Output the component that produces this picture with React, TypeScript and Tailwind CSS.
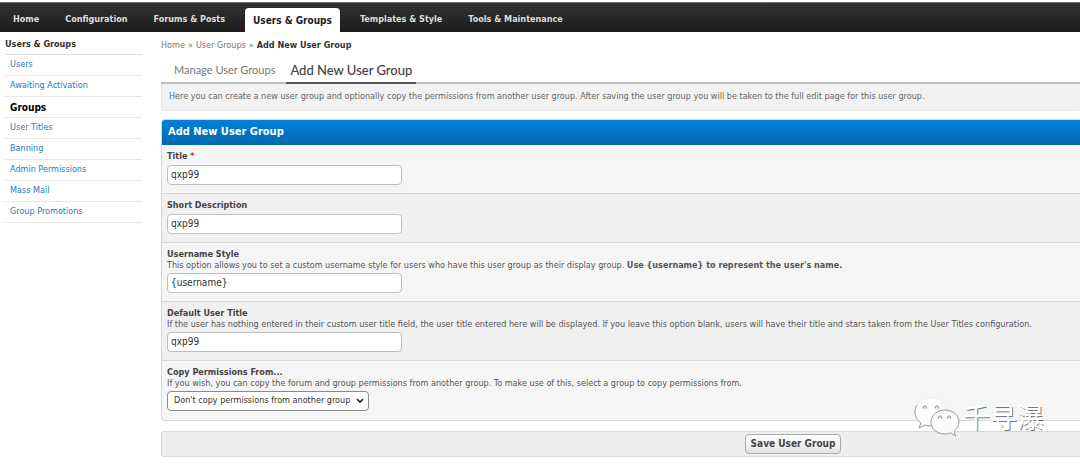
import type { ReactNode } from "react";

const navItems = ["Home", "Configuration", "Forums & Posts", "Users & Groups", "Templates & Style", "Tools & Maintenance"];

const sideItems = [
  "Users",
  "Awaiting Activation",
  "Groups",
  "User Titles",
  "Banning",
  "Admin Permissions",
  "Mass Mail",
  "Group Promotions",
];

function Nav() {
  return (
    <nav className="flex h-[30px] items-end gap-[10px] border-t border-[#6b7472] bg-linear-to-b from-[#333333] to-[#1b1b1b] pl-[5px] font-bold">
      {navItems.map((item) => (
        <a
          key={item}
          href="#"
          className={
            item === "Users & Groups"
              ? "mx-[2px] flex h-6 items-center rounded-t-[4px] bg-white px-2 text-[10px] text-[#222222]"
              : "flex h-6 items-center px-2 text-[#dddddd]"
          }
        >
          {item}
        </a>
      ))}
    </nav>
  );
}

function Sidebar() {
  return (
    <aside className="w-[137px] shrink-0">
      <h2 className="flex h-[23px] items-center border-b border-[#dddddd] pt-[3px] font-bold text-[#333333]">
        Users &amp; Groups
      </h2>
      <ul>
        {sideItems.map((item) => (
          <li key={item} className="flex h-[21px] items-center border-b border-[#e6e6e6] pl-[5px]">
            <a href="#" className={item === "Groups" ? "text-[10px] font-bold text-black" : "text-[#2a7ab8]"}>
              {item}
            </a>
          </li>
        ))}
      </ul>
    </aside>
  );
}

type FieldProps = { id: string; label: string; required?: boolean; note?: ReactNode; children: ReactNode };

function Field({ id, label, required, note, children }: FieldProps) {
  return (
    <div className="border-b border-[#d8d8d8] bg-[#f5f5f5] px-[5px] pt-[5px] pb-2 last:border-b-0 last:pb-[9px] even:bg-[#f0f0f0]">
      <label htmlFor={id} className="block leading-3 font-bold text-[#444444]">
        {label}
        {required && <span className="text-[#dd3333]"> *</span>}
      </label>
      {note && <p className="leading-[10px] whitespace-nowrap text-[#555555]">{note}</p>}
      <div className="mt-[3px] flex">{children}</div>
    </div>
  );
}

function TextField({ id, value }: { id: string; value: string }) {
  return (
    <input
      id={id}
      type="text"
      defaultValue={value}
      className="h-5 w-[235px] rounded-[4px] border border-[#bdbdbd] bg-white px-[3px] text-[10px] text-[#333333]"
    />
  );
}

function Watermark() {
  return (
    <div className="pointer-events-none absolute top-[396px] left-[913px] flex items-center gap-[3px]">
      <svg width="47" height="42" viewBox="0 0 47 42" aria-hidden="true">
        <path
          d="M18 2C9 2 2 8 2 16c0 5 2.500 8.500 6 11l-2 5 6-3c2 .7 4 1 6 1 9 0 16-6 16-14S27 2 18 2Z"
          fill="#fdfdfd"
          stroke="#dddddd"
          strokeWidth="0.500"
        />
        <path d="M4 9C2.500 11.500 2 14 2 16c0 5 2.500 8.500 6 11l-2 5 6-3c2 .7 4 1 6 1" fill="none" stroke="#999999" strokeWidth="0.900" />
        <path
          d="M32 14c-8 0-14 5.300-14 12s6 12 14 12c2 0 4-.4 5.500-1l5 3-1.400-5c3-2.200 4.900-5.400 4.900-9 0-6.700-6-12-14-12Z"
          fill="#fafafa"
          stroke="#909090"
          strokeWidth="0.900"
        />
        <path
          d="M10 12.500c-.5-3.500 4-3.500 3.500 0M22 12.500c-.5-3.500 4-3.500 3.500 0M25.500 22.500c-.5-3.300 3.700-3.300 3.200 0M34.500 22.500c-.5-3.300 3.700-3.300 3.200 0"
          fill="#dddddd"
          stroke="#888888"
        />
      </svg>
      <span className="font-['Noto_Sans_CJK_SC',sans-serif] text-[27px] leading-[42px] font-light text-white [text-shadow:-1px_-1px_0_#ffffff,1px_1px_0_#777777]">
        千寻瀑
      </span>
    </div>
  );
}

export default function App() {
  return (
    <div className="relative overflow-x-clip bg-white pt-[2px] font-['DejaVu_Sans_Condensed','DejaVu_Sans',sans-serif] text-[9px]">
      <Nav />
      <div className="flex gap-[19px] pl-[5px]">
        <Sidebar />
        <main className="min-w-0 flex-1 pt-[7px]">
          <div className="flex gap-[3px] text-[#777777]">
            <a href="#">Home</a>
            <span>»</span>
            <a href="#">User Groups</a>
            <span>»</span>
            <strong className="text-[#333333]">Add New User Group</strong>
          </div>
          <div className="mt-[5px] flex border-b-2 border-[#bbbbbb] pl-[5px] font-['Lato',sans-serif] leading-6">
            <a href="#" className="pr-[11px] pl-2 text-[11px] text-[#777777]">
              Manage User Groups
            </a>
            <a href="#" className="-mb-[2px] border-b-2 border-[#555555] px-1 text-[13px] font-medium text-[#444444]">
              Add New User Group
            </a>
          </div>
          <p className="flex h-[27px] items-center rounded-b-[3px] border-b border-l border-[#e5e5e5] bg-[#f2f2f2] px-[7px] pt-px whitespace-nowrap text-[#666666]">
            Here you can create a new user group and optionally copy the permissions from another user group. After saving
            the user group you will be taken to the full edit page for this user group.
          </p>
          <form>
            <section className="mt-2 overflow-hidden rounded-l-[4px] border-y border-l border-[#d8d8d8]">
              <h1 className="flex h-[26px] items-center border-b border-[#085386] bg-linear-to-b from-[#0280d8] to-[#0069ad] px-[6px] pt-px text-[11px] font-bold text-white">
                Add New User Group
              </h1>
              <div className="-mt-px">
                <Field id="title" label="Title" required>
                  <TextField id="title" value="qxp99" />
                </Field>
                <Field id="description" label="Short Description">
                  <TextField id="description" value="qxp99" />
                </Field>
                <Field
                  id="style"
                  label="Username Style"
                  note={
                    <>
                      This option allows you to set a custom username style for users who have this user group as their
                      display group. <strong>Use {"{username}"} to represent the user's name.</strong>
                    </>
                  }
                >
                  <TextField id="style" value="{username}" />
                </Field>
                <Field
                  id="user-title"
                  label="Default User Title"
                  note="If the user has nothing entered in their custom user title field, the user title entered here will be displayed. If you leave this option blank, users will have their title and stars taken from the User Titles configuration."
                >
                  <TextField id="user-title" value="qxp99" />
                </Field>
                <Field
                  id="copy"
                  label="Copy Permissions From..."
                  note="If you wish, you can copy the forum and group permissions from another group. To make use of this, select a group to copy permissions from."
                >
                  <div className="relative">
                    <select
                      id="copy"
                      className="h-5 w-[202px] appearance-none rounded-[4px] border border-[#8a8a8a] bg-white pl-[6px] text-[9px] text-[#333333]"
                    >
                      <option>Don't copy permissions from another group</option>
                    </select>
                    <svg
                      className="pointer-events-none absolute top-[7px] right-[5px]"
                      width="8"
                      height="6"
                      viewBox="0 0 8 6"
                      aria-hidden="true"
                    >
                      <path d="m1 1 3 3 3-3" fill="none" stroke="#222222" strokeWidth="1.600" />
                    </svg>
                  </div>
                </Field>
              </div>
            </section>
            <div className="mt-[10px] flex h-[26px] items-center rounded-l-[3px] border-y border-l border-[#d9d9d9] bg-[#eeeeee] pl-[583px]">
              <button
                type="button"
                className="h-5 w-24 rounded-[4px] border border-[#aaaaaa] bg-linear-to-b from-white to-[#e4e4e4] text-[10px] font-bold whitespace-nowrap text-[#444444]"
              >
                Save User Group
              </button>
            </div>
          </form>
        </main>
      </div>
      <Watermark />
    </div>
  );
}
